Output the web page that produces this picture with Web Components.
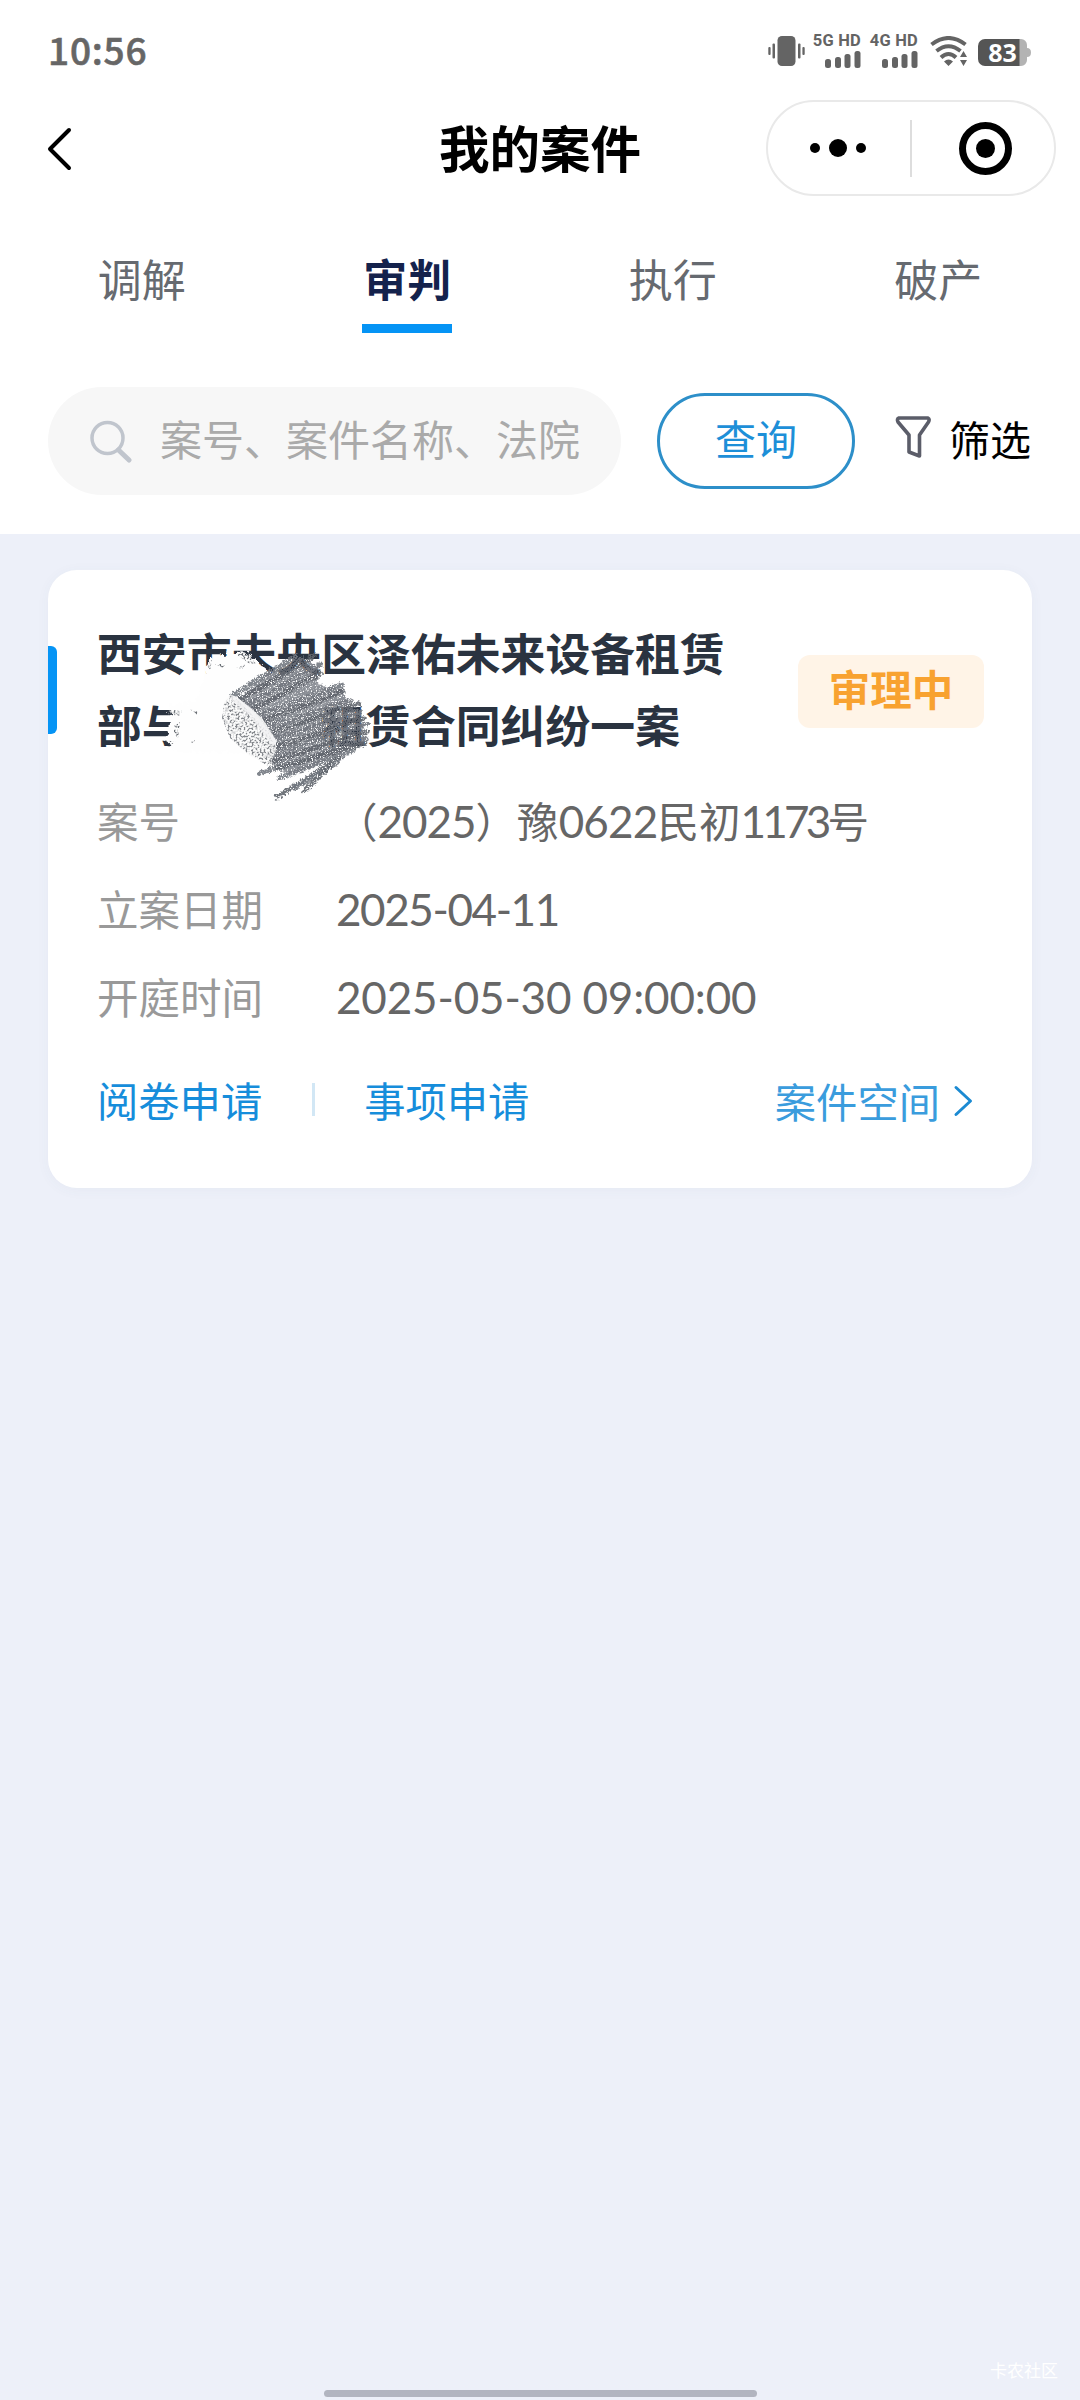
<!DOCTYPE html>
<html lang="zh-CN">
<head>
<meta charset="utf-8">
<title>我的案件</title>
<style>
html,body{margin:0;padding:0;background:#edf0f9}
body{font-family:"Noto Sans CJK SC",sans-serif;width:1080px;height:2400px;overflow:hidden;text-autospace:no-autospace}
</style>
</head>
<body>
<case-app></case-app>
<script>
function define(name, html, after){
  const t=document.createElement('template');
  t.innerHTML=html.trim();
  customElements.define(name,class extends HTMLElement{
    constructor(){super();this.attachShadow({mode:'open'}).append(t.content.cloneNode(true));}
    connectedCallback(){if(after)after(this,this.shadowRoot);}
  });
}

define('signal-bars',`
<style>
:host{display:flex;flex-direction:column;align-items:flex-end;width:50px;font:700 16.5px/16px Roboto,sans-serif;color:#646464;letter-spacing:.2px;white-space:nowrap}
svg{display:block;margin-top:2px}
</style>
<span><slot></slot></span>
<svg width="36" height="17" viewBox="0 0 36 17" fill="#646464"><rect x="0" y="8" width="6" height="9" rx="2.5"/><rect x="10" y="6" width="6" height="11" rx="2.5"/><rect x="19.500" y="3" width="6" height="14" rx="2.5"/><rect x="29.500" y="0" width="6" height="17" rx="2.500"/></svg>`);

define('battery-level',`
<style>
:host{display:grid;width:55px;height:29px}
svg,span{grid-area:1/1}
svg{display:block}
span{width:51px;text-align:center;font:700 25px/28px "Open Sans",sans-serif;color:#fff}
</style>
<svg width="55" height="29" viewBox="0 0 55 29"><path d="M40 1h4a6 6 0 0 1 6 6v3q4 0 4 4.500t-4 4.500v3a6 6 0 0 1-6 6h-4z" fill="#b3b3b3"/><path d="M42.500 1H8a7 7 0 0 0-7 7v13a7 7 0 0 0 7 7h34.500z" fill="#555"/></svg><span><slot></slot></span>`);

define('status-bar',`
<style>
:host{display:flex;height:100px;box-sizing:border-box;padding:0 48px 0 48px;align-items:flex-start;justify-content:space-between}
.time{font:500 37px/44px "Noto Sans CJK SC",sans-serif;-webkit-text-stroke:.6px #666;color:#666;margin-top:27px;letter-spacing:.8px}
.icons{display:flex;align-items:flex-start}
svg{display:block}
.vib{margin:36px 6px 0 0}
signal-bars{margin-top:33px}
signal-bars+signal-bars{margin-left:7px}
.wifi{margin:36px 0 0 12px}
battery-level{margin:38px 0 0 9px}
</style>
<span class="time">10:56</span>
<div class="icons">
<svg class="vib" width="37" height="31" viewBox="0 0 37 31" fill="#646464"><rect x="9.500" width="18" height="30" rx="4.500"/><rect x="4.500" y="7.500" width="2.500" height="15" rx="1"/><rect x=".3" y="11" width="2.300" height="8" rx="1"/><rect x="30" y="7.500" width="2.500" height="15" rx="1"/><rect x="34.400" y="11" width="2.300" height="8" rx="1"/></svg>
<signal-bars>5G HD</signal-bars>
<signal-bars>4G HD</signal-bars>
<svg class="wifi" width="38" height="31" viewBox="0 0 38 31"><g fill="none" stroke="#646464" stroke-width="4"><path d="M1.500 8.500Q18.500-4.500 35.500 8.500"/><path d="M6.500 15Q18.500 5.500 30.500 15"/><path d="M11 21.500Q18.500 14.500 26 21.500"/></g><path d="M14 25.500Q18.500 21.500 23 25.500L18.500 30ZM33.500 15L37 21H30ZM33.500 30L37 24H30Z" fill="#646464"/></svg>
<battery-level>83</battery-level>
</div>`);

define('nav-bar',`
<style>
:host{display:grid;grid-template-columns:290px 1fr 290px;height:96px;align-items:center;padding:0 24px}
.title{justify-self:center;font-weight:700;font-size:50.500px;line-height:60px;color:#000;margin-top:-5px;white-space:nowrap}
.back{margin-left:23px}
.capsule{box-sizing:border-box;width:290px;height:96px;border:2px solid #e9e9e9;border-radius:48px}
svg{display:block}
</style>
<svg class="back" width="26" height="46" viewBox="0 0 26 46" fill="none" stroke="#000" stroke-width="4" stroke-linecap="round" stroke-linejoin="round"><path d="M22 5L3 24L22 43"/></svg>
<div class="title"><slot></slot></div>
<div class="capsule"><svg width="286" height="92" viewBox="0 0 286 92"><circle cx="47" cy="46" r="5"/><circle cx="70" cy="46" r="9"/><circle cx="93" cy="46" r="5"/><path d="M143 18V75" stroke="#ddd" stroke-width="2"/><circle cx="217.500" cy="46.500" r="23" fill="none" stroke="#000" stroke-width="7"/><circle cx="217.500" cy="46.500" r="9.500"/></svg></div>`);

define('tab-item',`
<style>
:host{display:flex;flex:1;flex-direction:column;align-items:center;font-size:44px;line-height:60px;color:#666a70}
i{width:90px;height:9px;margin-top:16px;background:transparent}
:host([active]){color:#14224c;font-weight:700}
:host([active]) i{background:#0594f5}
</style>
<span><slot></slot></span><i></i>`);

define('tab-strip',`
<style>:host{display:flex;padding:52px 9px 0}</style><slot></slot>`);

define('search-row',`
<style>
:host{display:flex;align-items:center;padding:54px 49px 39px 48px;font-size:41px;line-height:60px;white-space:nowrap}
.field{display:flex;align-items:center;box-sizing:border-box;width:573px;height:108px;border-radius:54px;background:#f7f7f7;color:#aaa;padding-left:42px}
.field span{margin:-7px 0 0 27px;font-size:42px}
.btn{box-sizing:border-box;width:198px;height:96px;border:3px solid #2d8fc9;border-radius:48px;color:#1d8fd8;margin-left:36px;line-height:83px;text-align:center}
.filter{display:flex;align-items:center;margin-left:40px;color:#000}
.filter span{margin:-7px 0 0 17px}
.filter svg{margin-top:-7px}
svg{display:block}
</style>
<div class="field"><svg width="43" height="43" viewBox="0 0 43 43" fill="none" stroke="#c0c5cd" stroke-linecap="round"><circle cx="17.500" cy="18" r="15.500" stroke-width="3.500"/><path d="M28.500 30L39 40" stroke-width="5"/></svg><span>案号、案件名称、法院</span></div>
<div class="btn">查询</div>
<div class="filter"><svg width="37" height="52" viewBox="0 0 37 52" fill="none" stroke="#5b5d69" stroke-width="3.600" stroke-linejoin="round"><path d="M4 6H33Q35 7 33.500 10L24.500 23V44L14 40V23L3 10Q1.500 7 4 6Z"/></svg><span>筛选</span></div>`);

define('status-badge',`
<style>:host{display:block;width:186px;height:73px;border-radius:12px;background:#fff4e7;color:#f8a230;font-weight:700;font-size:41.500px;line-height:66px;text-align:center}</style><slot></slot>`);

define('info-row',`
<style>
:host{display:flex;height:88px;line-height:60px;font-size:41.500px;white-space:nowrap}
.label{width:239px;color:#999}
.value{color:#666}
</style>
<span class="label"><slot name="label"></slot></span><span class="value"><slot></slot></span>`);

define('num-text',`
<style>:host{font-family:Lato,sans-serif;font-size:44px;line-height:1px}</style><slot></slot>`);

define('pencil-scribble',`
<style>:host{display:block;pointer-events:none}svg{display:block}</style>
<svg width="230" height="180" viewBox="160 630 230 180">
<defs>
<filter id="rough" x="-10%" y="-10%" width="120%" height="120%"><feTurbulence type="fractalNoise" baseFrequency=".35" numOctaves="2" seed="4" result="n"/><feDisplacementMap in="SourceGraphic" in2="n" scale="6" xChannelSelector="R" yChannelSelector="G" result="d"/><feTurbulence type="fractalNoise" baseFrequency=".8" numOctaves="2" seed="9"/><feColorMatrix values="0 0 0 0 0 0 0 0 0 0 0 0 0 0 0 0 0 0 -5 3.700" result="m"/><feComposite in="d" in2="m" operator="in"/></filter>
<filter id="grain" x="-10%" y="-10%" width="120%" height="120%"><feTurbulence type="fractalNoise" baseFrequency=".5" numOctaves="3" seed="6"/><feColorMatrix values="0 0 0 0 0 0 0 0 0 0 0 0 0 0 0 0 0 0 -5 2.700" result="m"/><feComposite in="SourceGraphic" in2="m" operator="in"/></filter>
<filter id="edge" x="-10%" y="-10%" width="120%" height="120%"><feTurbulence type="fractalNoise" baseFrequency=".22" numOctaves="3" seed="2"/><feDisplacementMap in="SourceGraphic" scale="12" xChannelSelector="R" yChannelSelector="G"/></filter>
</defs>
<path filter="url(#edge)" fill="#fefefe" d="M208 662L222 654L246 652L258 662L270 672L320 740L322 752H180L172 749L166 738L170 720L168 706L196 700L202 684Z"/>
<g id="dark" filter="url(#rough)"></g>
<path fill="#fbfbfb" fill-opacity=".88" d="M222 718L224 702L230 694L238 698L262 718L276 740L276 750L270 765L250 756L232 740Z"/>
<g filter="url(#grain)"><path fill="#85888d" d="M222 718L224 704L232 694L268 732L276 748L270 768L256 758L246 752L230 738Z"/><path fill="#6b6f75" d="M206 664L212 660L210 670ZM214 664L226 664L222 668ZM236 654L248 652L256 664L250 664ZM236 668L246 664L242 669ZM168 710L182 710L180 716L168 714ZM174 726L180 722L178 738L174 734ZM164 740L176 742L170 745ZM190 709L198 712L196 715ZM190 740L196 740L192 743Z"/></g>
<path d="M234 699L250 711L273 742" fill="none" stroke="#f4f4f5" stroke-width="6" stroke-linecap="round" opacity=".8"/>
</svg>`,(host,root)=>{
  const g=root.getElementById('dark');
  const add=(d,fill,stroke,w,o)=>{
    const p=document.createElementNS('http://www.w3.org/2000/svg','path');
    p.setAttribute('d',d);p.setAttribute('fill',fill);p.setAttribute('stroke',stroke);
    p.setAttribute('stroke-width',w);p.setAttribute('stroke-linecap','round');p.setAttribute('opacity',o);g.append(p);
  };
  add('M238 698L268 674L302 657L320 668L318 684L342 690L350 706L362 718L364 740L340 752L296 774L276 770L270 758L276 750L272 736Z','#747880','none',0,.82);
  const lines=[[232,696,296,656],[238,701,314,656],[243,707,320,664],[248,712,320,673],[254,718,341,685],[258,723,343,691],[263,728,350,701],[266,734,359,704],[270,740,360,712],[272,748,363,718],[268,755,366,724],[272,761,366,732],[260,773,366,739],[278,767,364,744],[279,778,352,751],[277,797,340,758],[294,788,338,762],[304,791,330,766]];
  lines.forEach((l,i)=>add(`M${l[0]} ${l[1]}L${l[2]} ${l[3]}`,'none',i%2?'#62666e':'#747981',i>14?5:5.500,.9));
  lines.slice(1,14).forEach(l=>add(`M${l[0]+12} ${l[1]-3}L${l[0]+40} ${l[1]-16}M${l[0]+52} ${l[1]-20}l18 -8`,'none','#a4a7ad',1,.8));
});

define('case-card',`
<style>
:host{display:block;position:relative;box-sizing:border-box;width:984px;height:618px;margin:36px 48px 0;border-radius:29px;background:#fff;padding-top:47px;box-shadow:0 2px 14px rgba(60,90,110,.045)}
.head{display:flex;align-items:center;height:144px;padding-right:48px}
.bar{width:9px;height:88px;border-radius:0 6px 6px 0;background:#0594f5;margin:2px 40px 0 0}
h2{flex:1;margin:-3px 0 0;font-size:44.850px;line-height:72px;font-weight:700;color:#2a3340;white-space:nowrap}
.gap{display:inline-block;width:3em}
status-badge{margin-top:4px}
pencil-scribble{position:absolute;left:112px;top:60px}
.rows{padding:29px 0 0 49px}
.foot{display:flex;align-items:center;padding:14px 57px 0 49px;font-size:41.300px;line-height:60px;color:#168ddb;white-space:nowrap}
.sep{width:3px;height:33px;background:#d2e7f5;margin:0 49px 0 50px}
.space{margin-left:auto;display:flex;align-items:center;color:#3a9cdd;padding-top:2px}
.space svg{margin:2px 0 0 13px}
</style>
<div class="head"><div class="bar"></div><h2>西安市未央区泽佑未来设备租赁<br>部与<span class="gap"></span>租赁合同纠纷一案</h2><status-badge>审理中</status-badge></div>
<div class="rows">
<info-row><span slot="label">案号</span>（<num-text style="letter-spacing:-1px">2025</num-text>）豫<num-text style="letter-spacing:-.8px">0622</num-text>民初<num-text style="letter-spacing:-3.8px">1173</num-text>号</info-row>
<info-row><span slot="label">立案日期</span><num-text style="letter-spacing:-1.400px">2025-04-11</num-text></info-row>
<info-row><span slot="label">开庭时间</span><num-text style="letter-spacing:-.15px">2025-05-30 09:00:00</num-text></info-row>
</div>
<div class="foot"><span>阅卷申请</span><div class="sep"></div><span>事项申请</span><span class="space">案件空间<svg width="22" height="32" viewBox="0 0 22 32" fill="none" stroke="#1b8ad2" stroke-width="3" stroke-linecap="round" stroke-linejoin="round"><path d="M3 2.500L17.500 16L3 29.500"/></svg></span></div>
<pencil-scribble></pencil-scribble>`);

define('page-foot',`
<style>
:host{display:grid;grid-template-columns:1fr 433px 1fr;height:40px}
.home{height:7px;border-radius:4px;background:#b2b5c0;align-self:end;margin-bottom:3px}
.mark{justify-self:end;margin-right:22px;font-size:17px;line-height:20px;color:#fff}
</style>
<span></span><div class="home"></div><span class="mark">卡农社区</span>`);

define('case-app',`
<style>
:host{display:flex;flex-direction:column;height:2400px;width:1080px}
header{background:#fff;height:534px;flex:none}
page-foot{margin-top:auto}
</style>
<header><status-bar></status-bar><nav-bar>我的案件</nav-bar>
<tab-strip><tab-item>调解</tab-item><tab-item active>审判</tab-item><tab-item>执行</tab-item><tab-item>破产</tab-item></tab-strip>
<search-row></search-row></header>
<case-card></case-card>
<page-foot></page-foot>`);
</script>
</body>
</html>
